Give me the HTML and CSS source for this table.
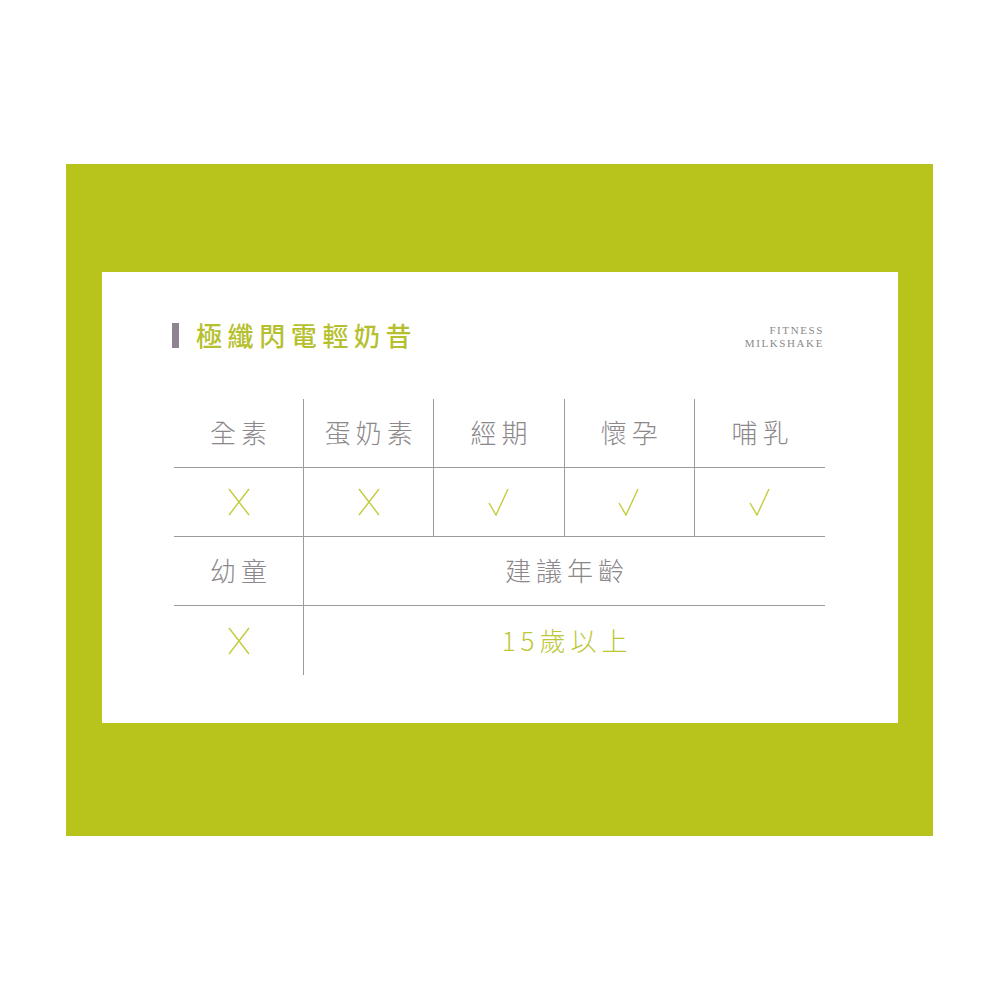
FILE: index.html
```html
<!DOCTYPE html>
<html lang="zh-Hant">
<head>
<meta charset="utf-8">
<title>極纖閃電輕奶昔</title>
<link rel="stylesheet" href="styles.css">
</head>
<body>
<div class="frame">
  <div class="card">
    <div class="head">
      <div class="title"><span class="bar"></span><h1>極纖閃電輕奶昔</h1></div>
      <div class="brand"><span>FITNESS</span><span>MILKSHAKE</span></div>
    </div>
    <div class="table">
      <div class="cell th vr">全素</div>
      <div class="cell th vr">蛋奶素</div>
      <div class="cell th vr">經期</div>
      <div class="cell th vr">懷孕</div>
      <div class="cell th">哺乳</div>

      <div class="cell vr hb"><svg class="mark" viewBox="0 0 22 28"><path d="M1 1 L21 27 M21 1 L1 27"/></svg></div>
      <div class="cell vr hb"><svg class="mark" viewBox="0 0 22 28"><path d="M1 1 L21 27 M21 1 L1 27"/></svg></div>
      <div class="cell vr hb"><svg class="mark" viewBox="0 0 22 28"><path d="M1 15 L8 27 L20 1"/></svg></div>
      <div class="cell vr hb"><svg class="mark" viewBox="0 0 22 28"><path d="M1 15 L8 27 L20 1"/></svg></div>
      <div class="cell hb"><svg class="mark" viewBox="0 0 22 28"><path d="M1 15 L8 27 L20 1"/></svg></div>

      <div class="cell th vr hb">幼童</div>
      <div class="cell th span hb">建議年齡</div>

      <div class="cell vr"><svg class="mark" viewBox="0 0 22 28"><path d="M1 1 L21 27 M21 1 L1 27"/></svg></div>
      <div class="cell span green">15歲以上</div>
    </div>
  </div>
</div>
</body>
</html>
```
FILE: styles.css
```css
html, body {
  margin: 0;
  padding: 0;
  background: #ffffff;
}
body {
  font-family: "Noto Sans CJK TC", "Noto Sans", sans-serif;
}
.frame {
  margin: 164px 0 0 66px;
  width: 867px;
  height: 672px;
  box-sizing: border-box;
  padding: 108px 35px 0 36px;
  background: #b8c31b;
}
.card {
  background: #ffffff;
  height: 451px;
  box-sizing: border-box;
  padding: 50px 73px 0 72px;
}
.head {
  display: flex;
  justify-content: space-between;
  align-items: center;
  height: 26px;
  margin-left: -2px;
  margin-right: 2px;
}
.title {
  display: flex;
  align-items: center;
  gap: 17px;
}
.bar {
  width: 7px;
  height: 25px;
  background: #8f8391;
}
.title h1 {
  margin: 0;
  font-size: 26px;
  line-height: 26px;
  font-weight: 500;
  letter-spacing: 5.6px;
  color: #b6bf2e;
}
.brand {
  display: flex;
  flex-direction: column;
  align-items: flex-end;
  font-family: "Liberation Serif", serif;
  font-size: 11px;
  line-height: 13px;
  letter-spacing: 1.6px;
  color: #8a8a8a;
  margin-right: -1px;
  margin-top: 4px;
}
.table {
  margin-top: 51px;
  display: grid;
  grid-template-columns: repeat(5, 1fr);
  grid-auto-rows: 69px;
  width: 651px;
}
.cell {
  display: flex;
  align-items: center;
  justify-content: center;
  box-sizing: border-box;
}
.th {
  font-size: 26px;
  font-weight: 300;
  letter-spacing: 5px;
  padding-left: 5px;
  padding-bottom: 4px;
  color: #8b878a;
}
.vr {
  border-right: 1.5px solid #9c9a9c;
}
.hb, .th:nth-child(-n+5) {
  border-bottom: 1.5px solid #9c9a9c;
}
.span {
  grid-column: 2 / 6;
}
.green {
  font-size: 26px;
  font-weight: 300;
  letter-spacing: 5px;
  padding-left: 5px;
  padding-bottom: 3px;
  color: #bcc736;
}
.mark {
  width: 22px;
  height: 28px;
  fill: none;
  stroke: #c3cc3c;
  stroke-width: 1.4;
}
```
